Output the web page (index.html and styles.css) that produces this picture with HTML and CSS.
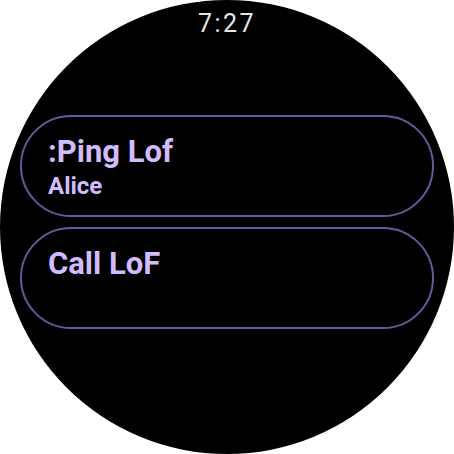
FILE: index.html
```html
<!DOCTYPE html>
<html>
<head>
<meta charset="utf-8">
<link rel="stylesheet" href="styles.css">
</head>
<body>
<div class="watch">
  <div class="time">7:27</div>
  <div class="list">
    <div class="chip">
      <div class="title">:Ping Lof</div>
      <div class="sub">Alice</div>
    </div>
    <div class="chip">
      <div class="title">Call LoF</div>
    </div>
  </div>
</div>
</body>
</html>
```
FILE: styles.css
```css
html, body {
  margin: 0;
  padding: 0;
  background: #ffffff;
}
.watch {
  width: 454px;
  height: 454px;
  border-radius: 50%;
  background: #000000;
  overflow: hidden;
  display: flex;
  flex-direction: column;
  align-items: center;
  font-family: Roboto, "Noto Sans", sans-serif;
}
.time {
  margin-top: 8px;
  font-size: 25px;
  line-height: 32px;
  color: #e6e6e6;
  letter-spacing: 2.5px;
}
.list {
  margin-top: 75px;
  width: 414px;
  display: flex;
  flex-direction: column;
  gap: 10px;
}
.chip {
  box-sizing: border-box;
  height: 102px;
  border: 2px solid #68589a;
  border-radius: 51px;
  padding: 18px 26px 0;
  color: #d0bcff;
}
.title {
  font-size: 31px;
  font-weight: 700;
  line-height: 34px;
}
.sub {
  margin-top: 3px;
  font-size: 24px;
  font-weight: 700;
  line-height: 28px;
}
```
